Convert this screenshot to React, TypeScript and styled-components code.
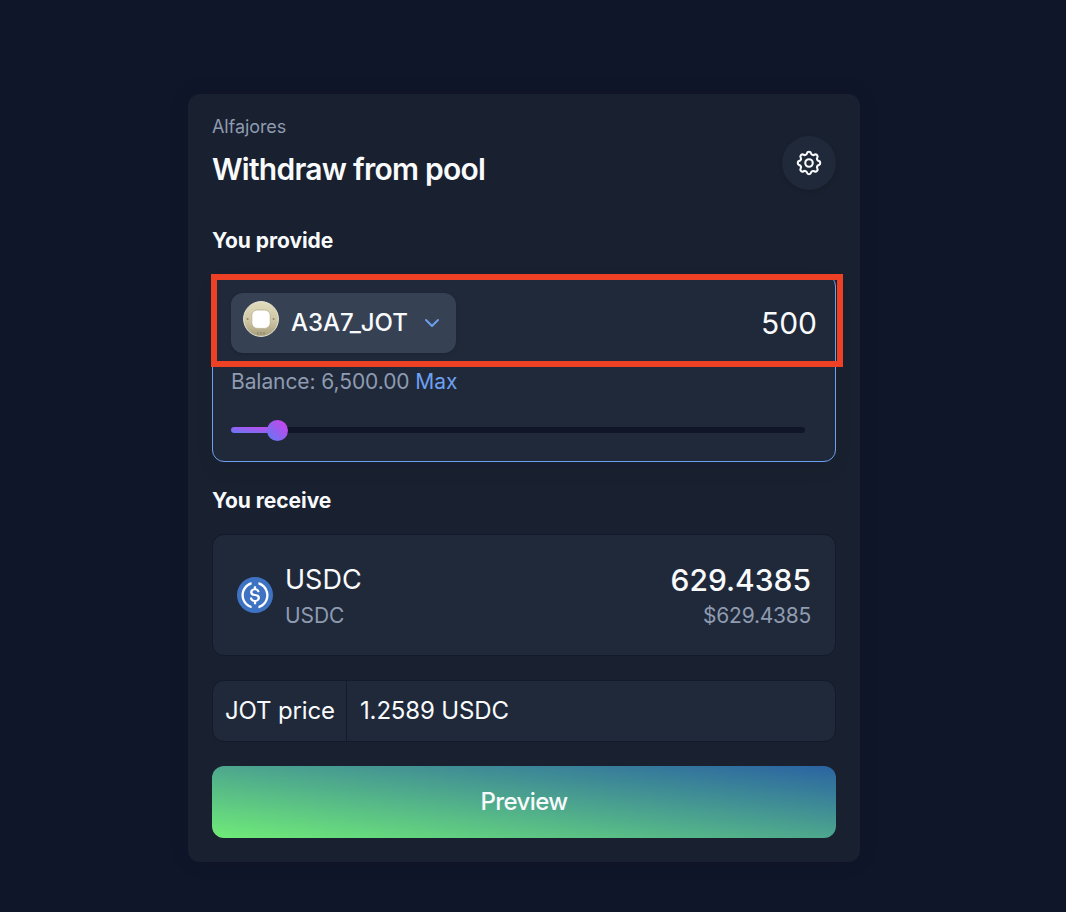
import React from "react";
import styled, { createGlobalStyle } from "styled-components";

const GlobalStyle = createGlobalStyle`
  *, *::before, *::after { box-sizing: border-box; }
  body {
    margin: 0;
    background: #101629;
    color: #f8fafc;
    font-family: Inter, "Liberation Sans", sans-serif;
  }
  button, input { font: inherit; color: inherit; border: 0; padding: 0; letter-spacing: inherit; }
`;

const Page = styled.main`
  min-height: 912px;
  padding: 94px 0 50px 188px;
  overflow: hidden;
`;

const Card = styled.section`
  width: 672px;
  height: 768px;
  padding: 24px;
  border-radius: 12px;
  background: #19202f;
  box-shadow: 0 0 22px rgba(0, 0, 0, 0.08);
  display: flex;
  flex-direction: column;
`;

const Header = styled.header`
  display: flex;
  justify-content: space-between;
  align-items: center;
  height: 90px;
`;

const Titles = styled.div`
  align-self: flex-start;
`;

const Network = styled.div`
  font-size: 18px;
  line-height: 18px;
  letter-spacing: -0.08px;
  color: #8e9bb0;
`;

const Title = styled.h1`
  margin: 15px 0 0;
  font-size: 30px;
  line-height: 36px;
  font-weight: 600;
  letter-spacing: -0.75px;
`;

const RoundButton = styled.button`
  width: 54px;
  height: 54px;
  border-radius: 50%;
  background: #20293a;
  box-shadow: 0 2px 4px rgba(0, 0, 0, 0.12);
  display: grid;
  place-items: center;
`;

const SectionLabel = styled.h2<{ $top: number }>`
  margin: ${(p) => p.$top}px 0 18px;
  font-size: 21px;
  line-height: 30px;
  font-weight: 700;
  letter-spacing: -0.05px;
`;

const ProvidePanel = styled.div`
  position: relative;
  height: 188px;
  padding: 18px;
  border: 1px solid #6ea0f0;
  border-radius: 12px;
  background: #20293a;
  box-shadow: 0 8px 20px rgba(0, 0, 0, 0.06);
`;

const Highlight = styled.div`
  position: absolute;
  left: -2px;
  top: -1px;
  width: 632px;
  height: 93px;
  border: 6px solid #ed4024;
  pointer-events: none;
`;

const Row = styled.div`
  display: flex;
  align-items: center;
  justify-content: space-between;
`;

const TokenSelect = styled.button`
  width: 225px;
  height: 60px;
  padding: 0 15px 0 12px;
  border-radius: 12px;
  background: #364154;
  box-shadow: 0 2px 4px rgba(0, 0, 0, 0.12);
  display: flex;
  align-items: center;
  font-size: 24px;
  line-height: 36px;
  font-weight: 500;
  letter-spacing: -0.05px;

  svg:first-child { margin: 0 12px 8px 0; }
  svg:last-child { margin-left: auto; }
`;

const Amount = styled.input`
  width: 240px;
  background: transparent;
  text-align: right;
  font-size: 30px;
  line-height: 36px;
  height: 36px;
  outline: 0;
`;

const Balance = styled.div`
  margin-top: 14px;
  font-size: 21px;
  line-height: 30px;
  letter-spacing: -0.08px;
  color: #8e9bb0;
`;

const MaxLink = styled.span`
  color: #6ea0f0;
`;

const Track = styled.div`
  width: 574px;
  height: 6px;
  margin-top: 30px;
  border-radius: 3px;
  background: #101528;
  display: flex;
  align-items: center;
`;

const Fill = styled.div`
  width: 46px;
  height: 6px;
  border-radius: 3px;
  background: linear-gradient(to top right, #6379f4, #cc46ec);
`;

const Thumb = styled.div`
  flex: none;
  width: 21px;
  height: 21px;
  margin-left: -10.5px;
  border-radius: 50%;
  background: linear-gradient(to top right, #5b7cf5, #d63eea);
`;

const ReceivePanel = styled.div`
  height: 122px;
  padding: 0 24px;
  border: 1px solid #121a2b;
  border-radius: 12px;
  background: #20293a;
  display: flex;
  align-items: center;
  gap: 12px;
`;

const Stack = styled.div<{ $end?: boolean }>`
  display: flex;
  flex-direction: column;
  margin-left: ${(p) => (p.$end ? "auto" : "0")};
  text-align: ${(p) => (p.$end ? "right" : "left")};
`;

const Main = styled.div<{ $size: number }>`
  font-size: ${(p) => p.$size}px;
  line-height: 42px;
  font-weight: ${(p) => (p.$size > 28 ? 500 : 400)};
`;

const Sub = styled.div<{ $tight?: boolean }>`
  font-size: 21px;
  line-height: 30px;
  letter-spacing: ${(p) => (p.$tight ? "-0.25px" : "-0.05px")};
  color: #8e9bb0;
`;

const PriceRow = styled.dl`
  margin: 24px 0;
  height: 62px;
  border: 1px solid #121a2b;
  border-radius: 12px;
  background: #20293a;
  display: flex;
  font-size: 24px;
  line-height: 60px;
  letter-spacing: -0.15px;
`;

const PriceLabel = styled.dt`
  width: 134px;
  padding-left: 12px;
  border-right: 1px solid #121a2b;
  white-space: nowrap;
`;

const PriceValue = styled.dd`
  margin: 0;
  padding-left: 13px;
`;

const PreviewButton = styled.button`
  height: 72px;
  border-radius: 12px;
  background: linear-gradient(to top right, #70eb78, #2a63a2);
  font-size: 24px;
  line-height: 36px;
  font-weight: 500;
  letter-spacing: -0.6px;
`;

const GearIcon = () => (
  <svg width="30" height="30" viewBox="0 0 24 24" fill="none" stroke="#f8fafc" strokeWidth="1.7" strokeLinecap="round" strokeLinejoin="round">
    <path d="M10.325 4.317c.426-1.756 2.924-1.756 3.35 0a1.724 1.724 0 002.573 1.066c1.543-.94 3.31.826 2.37 2.37a1.724 1.724 0 001.065 2.572c1.756.426 1.756 2.924 0 3.35a1.724 1.724 0 00-1.066 2.573c.94 1.543-.826 3.31-2.37 2.37a1.724 1.724 0 00-2.572 1.065c-.426 1.756-2.924 1.756-3.35 0a1.724 1.724 0 00-2.573-1.066c-1.543.94-3.31-.826-2.37-2.37a1.724 1.724 0 00-1.065-2.572c-1.756-.426-1.756-2.924 0-3.35a1.724 1.724 0 001.066-2.573c-.94-1.543.826-3.31 2.37-2.37.996.608 2.296.07 2.572-1.065z" />
    <circle cx="12" cy="12" r="3" />
  </svg>
);

const CoinIcon = () => (
  <svg width="36" height="36" viewBox="0 0 36 36">
    <defs>
      <linearGradient id="coin" x1="0" y1="0" x2="0" y2="1">
        <stop offset="0" stopColor="#e0dcbc" />
        <stop offset="0.55" stopColor="#cdc6a4" />
        <stop offset="1" stopColor="#a89c7c" />
      </linearGradient>
    </defs>
    <circle cx="18" cy="18" r="17.4" fill="url(#coin)" stroke="#e9e6d3" strokeWidth="1" />
    <rect x="8.8" y="9" width="18.4" height="18.4" rx="5.5" fill="#fff" stroke="#b8ae8c" strokeWidth="0.8" />
    <circle cx="4.6" cy="18" r="1" fill="#8f8668" />
    <circle cx="30.6" cy="18" r="1" fill="#8f8668" />
    <path d="M14 32.2h8" stroke="#8f8668" strokeWidth="2.4" strokeDasharray="2 1" opacity="0.6" />
  </svg>
);

const ChevronIcon = () => (
  <svg width="18" height="18" viewBox="0 0 18 18" fill="none" stroke="#6ea0f0" strokeWidth="1.9" strokeLinecap="round" strokeLinejoin="round">
    <path d="M3 6l6 6 6-6" />
  </svg>
);

const UsdcIcon = () => (
  <svg width="36" height="36" viewBox="0 0 2000 2000">
    <path d="M1000 2000c554.17 0 1000-445.83 1000-1000S1554.17 0 1000 0 0 445.83 0 1000s445.83 1000 1000 1000z" fill="#3e73c4" />
    <path d="M1275 1158.33c0-145.83-87.5-195.83-262.5-216.66-125-16.67-150-50-150-108.34s41.67-95.83 125-95.83c75 0 116.67 25 137.5 87.5 4.17 12.5 16.67 20.83 29.17 20.83h66.66c16.67 0 29.17-12.5 29.17-29.16v-4.17c-16.67-91.67-91.67-162.5-187.5-170.83v-100c0-16.67-12.5-29.17-33.33-33.34h-62.5c-16.67 0-29.17 12.5-33.34 33.34v95.83c-125 16.67-204.16 100-204.16 204.17 0 137.5 83.33 191.66 258.33 212.5 116.67 20.83 154.17 45.83 154.17 112.5s-58.34 112.5-137.5 112.5c-108.34 0-145.84-45.84-158.34-108.34-4.16-16.66-16.66-25-29.16-25h-70.84c-16.66 0-29.16 12.5-29.16 29.17v4.17c16.66 104.16 83.33 179.16 220.83 200v100c0 16.66 12.5 29.16 33.33 33.33h62.5c16.67 0 29.17-12.5 33.34-33.33v-100c125-20.84 208.33-108.34 208.33-220.84z" fill="#fff" />
    <path d="M787.5 1595.83c-325-116.66-491.67-479.16-370.83-800 62.5-175 200-308.33 370.83-370.83 16.67-8.33 25-20.83 25-41.67V325c0-16.67-8.33-29.17-25-33.33-4.17 0-12.5 0-16.67 4.16-395.83 125-612.5 545.84-487.5 941.67 75 233.33 254.17 412.5 487.5 487.5 16.67 8.33 33.34 0 37.5-16.67 4.17-4.16 4.17-8.33 4.17-16.66v-58.34c0-12.5-12.5-29.16-25-37.5zM1229.17 295.83c-16.67-8.33-33.34 0-37.5 16.67-4.17 4.17-4.17 8.33-4.17 16.67v58.33c0 16.67 12.5 33.33 25 41.67 325 116.66 491.67 479.16 370.83 800-62.5 175-200 308.33-370.83 370.83-16.67 8.33-25 20.83-25 41.67V1700c0 16.67 8.33 29.17 25 33.33 4.17 0 12.5 0 16.67-4.16 395.83-125 612.5-545.84 487.5-941.67-75-237.5-258.34-416.67-487.5-491.67z" fill="#fff" />
  </svg>
);

export default function App() {
  return (
    <Page>
      <GlobalStyle />
      <Card>
        <Header>
          <Titles>
            <Network>Alfajores</Network>
            <Title>Withdraw from pool</Title>
          </Titles>
          <RoundButton aria-label="Settings"><GearIcon /></RoundButton>
        </Header>

        <SectionLabel $top={18}>You provide</SectionLabel>
        <ProvidePanel>
          <Row>
            <TokenSelect>
              <CoinIcon />
              A3A7_JOT
              <ChevronIcon />
            </TokenSelect>
            <Amount defaultValue="500" aria-label="Amount" />
          </Row>
          <Balance>Balance: 6,500.00 <MaxLink>Max</MaxLink></Balance>
          <Track><Fill /><Thumb /></Track>
          <Highlight />
        </ProvidePanel>

        <SectionLabel $top={24}>You receive</SectionLabel>
        <ReceivePanel>
          <UsdcIcon />
          <Stack>
            <Main $size={27}>USDC</Main>
            <Sub>USDC</Sub>
          </Stack>
          <Stack $end>
            <Main $size={30}>629.4385</Main>
            <Sub $tight>$629.4385</Sub>
          </Stack>
        </ReceivePanel>

        <PriceRow>
          <PriceLabel>JOT price</PriceLabel>
          <PriceValue>1.2589 USDC</PriceValue>
        </PriceRow>
        <PreviewButton>Preview</PreviewButton>
      </Card>
    </Page>
  );
}
